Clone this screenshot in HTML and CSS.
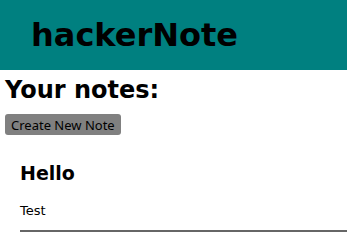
FILE: index.html
```html
<!DOCTYPE html>
<html>
<head>
<meta charset="utf-8">
<link rel="stylesheet" href="styles.css">
</head>
<body>
<header class="topbar">
  <h1 class="brand">hackerNote</h1>
</header>
<main class="content">
  <h2 class="title">Your notes:</h2>
  <button class="create">Create New Note</button>
  <div class="notes">
    <div class="note">
      <h3 class="note-title">Hello</h3>
      <p class="note-body">Test</p>
    </div>
  </div>
</main>
</body>
</html>
```
FILE: styles.css
```css
html, body {
  margin: 0;
  padding: 0;
  background: #fff;
  font-family: "DejaVu Sans", sans-serif;
  color: #000;
}
.topbar {
  background: #008080;
  height: 70px;
  padding-left: 31px;
  display: flex;
  align-items: center;
}
.brand {
  margin: 0;
  font-size: 32px;
  font-weight: bold;
}
.content {
  padding: 0 0 0 5px;
}
.title {
  margin: 6px 0 10px;
  font-size: 24px;
  font-weight: bold;
  line-height: 28px;
}
.create {
  font-family: "Noto Sans", sans-serif;
  font-size: 13px;
  background: #808080;
  color: #000;
  border: none;
  border-radius: 3px;
  padding: 2px 6px;
  height: 21px;
}
.notes {
  padding-left: 15px;
}
.note {
  padding-top: 27px;
  border-bottom: 2px solid #666;
  padding-bottom: 12px;
}
.note-title {
  margin: 0 0 19px;
  font-size: 19px;
  font-weight: bold;
}
.note-body {
  margin: 0;
  font-size: 13px;
}
```
